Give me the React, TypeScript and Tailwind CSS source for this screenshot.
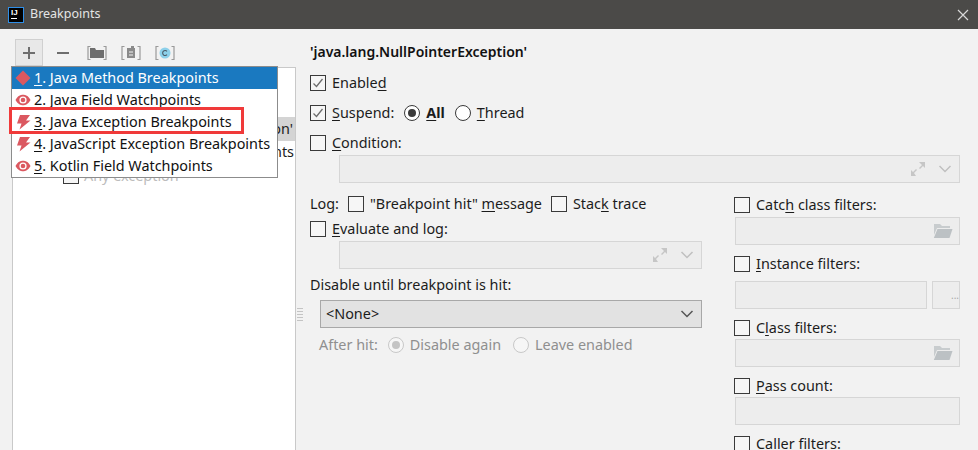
import React from "react";

function Check({ on = false }: { on?: boolean }) {
  return (
    <span className="flex h-4 w-4 shrink-0 items-center justify-center border border-[#3a3a3a] bg-[#f6f6f6]">
      {on && (
        <svg width="14" height="14" viewBox="0 0 14 14" fill="none">
          <path d="M2.5 7.5 L5.5 10.5 L11.5 3" stroke="#6e6e6e" strokeWidth="1.3" />
        </svg>
      )}
    </span>
  );
}

function Radio({ on = false, off = false }: { on?: boolean; off?: boolean }) {
  return (
    <span
      className={`flex h-4 w-4 shrink-0 items-center justify-center rounded-full border ${
        off ? "border-[#c8c8c8] bg-[#f6f6f6]" : "border-[#3a3a3a] bg-white"
      }`}
    >
      {on && <span className={`h-2 w-2 rounded-full ${off ? "bg-[#c4c4c4]" : "bg-[#3a3a3a]"}`} />}
    </span>
  );
}

function Mn({ children }: { children: React.ReactNode }) {
  return <span className="underline underline-offset-2">{children}</span>;
}

function Field({ className = "", children }: { className?: string; children?: React.ReactNode }) {
  return (
    <div className={`flex h-7 shrink-0 items-center justify-end border border-[#d6d6d6] bg-[#ededed] ${className}`}>
      {children}
    </div>
  );
}

function ExpandIcon() {
  return (
    <svg width="16" height="16" viewBox="0 0 16 16" className="mr-3" fill="#c6c6c6">
      <path d="M9 1h6v6l-2-2-3 3-1-1 3-3z" />
      <path d="M1 15V9l2 2 3-3 1 1-3 3 2 3z" />
    </svg>
  );
}

function Chevron({ color = "#c0c0c0" }: { color?: string }) {
  return (
    <svg width="14" height="10" viewBox="0 0 14 10" fill="none" className="mr-[7px]">
      <path d="M1.5 2 L7 7.5 L12.5 2" stroke={color} strokeWidth="1.5" />
    </svg>
  );
}

function OpenFolder() {
  return (
    <svg width="20" height="16" viewBox="0 0 20 16" className="mr-1.5">
      <path d="M1 3V1h6l2 2h8v2H4L1 12z" fill="#c8ccce" />
      <path d="M4.500 6H19.500L16.500 15H0.800z" fill="#bcc1c4" />
    </svg>
  );
}

function Diamond() {
  return (
    <svg width="16" height="16" viewBox="0 0 16 16">
      <path d="M8 0.500 L15.500 8 L8 15.500 L0.500 8z" fill="#db5860" />
    </svg>
  );
}

function Eye() {
  return (
    <svg width="16" height="16" viewBox="0 0 16 16">
      <path d="M0.500 8 C3 3.500 5.500 2.800 8 2.800 C10.500 2.800 13 3.500 15.500 8 C13 12.500 10.500 13.200 8 13.200 C5.500 13.200 3 12.500 0.500 8z" fill="#db5860" />
      <circle cx="8" cy="8" r="3.600" fill="#fff" />
      <circle cx="8" cy="8" r="2.300" fill="#db5860" />
    </svg>
  );
}

function Bolt() {
  return (
    <svg width="16" height="16" viewBox="0 0 16 16">
      <path d="M5 1H15L11 6.500H15.500L4.500 15.500L6.500 9.500H2z" fill="#db5860" />
    </svg>
  );
}

function ToolBtn({ children, active = false }: { children: React.ReactNode; active?: boolean }) {
  return (
    <div
      className={`flex h-[27px] w-[28px] items-center justify-center ${
        active ? "border border-[#d0d0d0] bg-[#e8e8e8]" : ""
      }`}
    >
      {children}
    </div>
  );
}

function Brackets({ children }: { children: React.ReactNode }) {
  return (
    <svg width="20" height="16" viewBox="0 0 20 16" fill="none">
      <path d="M3.500 1.500H1V14.500H3.500M16.500 1.500H19V14.500H16.500" stroke="#9a9a9a" strokeWidth="1.200" />
      {children}
    </svg>
  );
}

const menu = [
  { n: "1", rest: ". Java Method Breakpoints", icon: <Diamond />, sel: true },
  { n: "2", rest: ". Java Field Watchpoints", icon: <Eye /> },
  { n: "3", rest: ". Java Exception Breakpoints", icon: <Bolt /> },
  { n: "4", rest: ". JavaScript Exception Breakpoints", icon: <Bolt /> },
  { n: "5", rest: ". Kotlin Field Watchpoints", icon: <Eye /> },
];

export default function App() {
  return (
    <div className="relative flex h-[450px] w-[978px] flex-col overflow-hidden bg-[#f2f2f2] font-['Noto_Sans','Open_Sans',sans-serif] text-[14.4px] leading-5 text-[#1c1c1c]">
      {/* title bar */}
      <div className="flex h-[29px] shrink-0 items-center bg-[#4b4a48] pl-2 text-[#e4e4e4]">
        <div className="flex h-4 w-4 flex-col items-start border border-[#2f8fe8] bg-black pl-[2px] pt-[1px] font-['Liberation_Sans',sans-serif] text-[8px] font-bold leading-[8px] text-white">
          IJ
          <span className="mt-[1px] h-px w-[6px] bg-white" />
        </div>
        <span className="mb-[2px] ml-[6px] text-[12.5px]">Breakpoints</span>
        <svg width="12" height="12" viewBox="0 0 12 12" className="ml-auto mr-[9px]" fill="none">
          <path d="M1 1L11 11M11 1L1 11" stroke="#d8d8d8" strokeWidth="1.200" />
        </svg>
      </div>

      <div className="flex min-h-0 flex-1">
        {/* left side */}
        <div className="flex w-[296px] shrink-0 flex-col pl-[12px]">
          <div className="flex h-[38px] items-end gap-[6px] pb-[1px] pl-[3px]">
            <ToolBtn active>
              <svg width="14" height="14" viewBox="0 0 14 14">
                <path d="M6 1h2v5h5v2H8v5H6V8H1V6h5z" fill="#6e6e6e" />
              </svg>
            </ToolBtn>
            <ToolBtn>
              <svg width="14" height="14" viewBox="0 0 14 14">
                <path d="M1 6h12v2H1z" fill="#6e6e6e" />
              </svg>
            </ToolBtn>
            <ToolBtn>
              <Brackets>
                <path d="M3 3h5l1 2h8v8H3z" fill="#6e6e6e" />
              </Brackets>
            </ToolBtn>
            <ToolBtn>
              <Brackets>
                <path d="M6 3h4V1h3v2h1v10H6z" fill="#8a8a8a" />
                <path d="M8 7h4M8 10h4" stroke="#f2f2f2" />
              </Brackets>
            </ToolBtn>
            <ToolBtn>
              <Brackets>
                <circle cx="10" cy="8" r="5.500" fill="#8dd0ea" />
                <path d="M12 6.300A2.500 2.500 0 1 0 12 9.700" stroke="#4a5a66" strokeWidth="1.100" />
              </Brackets>
            </ToolBtn>
          </div>

          {/* breakpoint tree, mostly hidden by the menu */}
          <div className="min-h-0 flex-1 border border-b-0 border-[#c9c9c9] bg-white">
            <div className="mt-[49px] flex h-6 items-center justify-end bg-[#d4d4d4] pr-[2px] text-[#222]">on'</div>
            <div className="flex h-[22px] items-center justify-end pr-[1px]">nts</div>
            <div className="ml-[50px] mt-[3px] flex items-center gap-[5px] text-[#bcbcbc]">
              <Check />
              <span>Any exception</span>
            </div>
          </div>
        </div>

        {/* drag handle */}
        <div className="flex w-[14px] shrink-0 items-start">
          <div className="ml-[1px] mt-[278px] h-[16px] w-[6px] bg-[radial-gradient(#c4c4c4_0.8px,transparent_0.8px)] bg-[length:2px_3px]" />
        </div>

        {/* details */}
        <div className="flex min-w-0 flex-1 flex-col">
          <div className="mt-[12px] h-[22px] shrink-0 text-[14px] font-semibold leading-[22px] text-[#111]">'java.lang.NullPointerException'</div>

          <div className="mt-[10px] flex h-5 shrink-0 items-center gap-[6px]">
            <Check on />
            <span>
              Enable<Mn>d</Mn>
            </span>
          </div>
          <div className="mt-[10px] flex h-5 shrink-0 items-center gap-[6px]">
            <Check on />
            <span>
              <Mn>S</Mn>uspend:
            </span>
            <span className="ml-[4px]">
              <Radio on />
            </span>
            <span className="font-bold">
              <Mn>A</Mn>ll
            </span>
            <span className="ml-[4px]">
              <Radio />
            </span>
            <span>
              <Mn>T</Mn>hread
            </span>
          </div>
          <div className="mt-[10px] flex h-5 shrink-0 items-center gap-[6px]">
            <Check />
            <span>
              <Mn>C</Mn>ondition:
            </span>
          </div>
          <Field className="ml-[29px] mr-[18px] mt-[2px]">
            <ExpandIcon />
            <Chevron />
          </Field>

          <div className="flex shrink-0">
            <div className="flex w-[392px] shrink-0 flex-col">
              <div className="mt-[11px] flex h-5 items-center">
                <span>Log:</span>
                <span className="ml-[9px]">
                  <Check />
                </span>
                <span className="ml-[6px]">
                  "Breakpoint hit" <Mn>m</Mn>essage
                </span>
                <span className="ml-[9px]">
                  <Check />
                </span>
                <span className="ml-[6px]">
                  Stac<Mn>k</Mn> trace
                </span>
              </div>
              <div className="mt-[5px] flex h-5 items-center gap-[6px]">
                <Check />
                <span>
                  <Mn>E</Mn>valuate and log:
                </span>
              </div>
              <Field className="ml-[29px] mt-[2px]">
                <ExpandIcon />
                <Chevron />
              </Field>
              <div className="mt-[6px] h-5">Disable until breakpoint is hit:</div>
              <div className="ml-[10px] mt-[5px] flex h-7 items-center justify-between border border-[#a8a8a8] bg-[#e2e2e2] pl-[5px]">
                <span>&lt;None&gt;</span>
                <Chevron color="#555555" />
              </div>
              <div className="ml-[9px] mt-[7px] flex h-5 items-center text-[#8f8f8f]">
                <span>After hit:</span>
                <span className="ml-[10px]">
                  <Radio on off />
                </span>
                <span className="ml-[6px]">Disable again</span>
                <span className="ml-[12px]">
                  <Radio off />
                </span>
                <span className="ml-[6px]">Leave enabled</span>
              </div>
            </div>

            <div className="ml-[32px] flex w-[226px] shrink-0 flex-col">
              <div className="mt-[12px] flex h-5 items-center gap-[6px]">
                <Check />
                <span>
                  Catc<Mn>h</Mn> class filters:
                </span>
              </div>
              <Field className="ml-px mt-[2px]">
                <OpenFolder />
              </Field>
              <div className="mt-[9px] flex h-5 items-center gap-[6px]">
                <Check />
                <span>
                  <Mn>I</Mn>nstance filters:
                </span>
              </div>
              <div className="ml-px mt-[7px] flex gap-[5px]">
                <Field className="min-w-0 flex-1" />
                <Field className="w-7 justify-center text-[10px] leading-3 text-[#a8a8a8]">...</Field>
              </div>
              <div className="mt-[9px] flex h-5 items-center gap-[6px]">
                <Check />
                <span>
                  C<Mn>l</Mn>ass filters:
                </span>
              </div>
              <Field className="ml-px mt-px">
                <OpenFolder />
              </Field>
              <div className="mt-[9px] flex h-5 items-center gap-[6px]">
                <Check />
                <span>
                  <Mn>P</Mn>ass count:
                </span>
              </div>
              <Field className="ml-px mt-px" />
              <div className="mt-[9px] flex h-5 items-center gap-[6px]">
                <Check />
                <span>Caller filters:</span>
              </div>
            </div>
          </div>
        </div>
      </div>

      {/* add menu popup */}
      <div className="absolute left-[11px] top-[66px] w-[267px] border border-[#8c8c8c] bg-white">
        {menu.map((m) => (
          <div
            key={m.n}
            className={`flex h-[22px] items-center pl-[3px] ${m.sel ? "bg-[#1a79c0] text-white" : "text-[#111]"}`}
          >
            {m.icon}
            <span className="ml-[3px] whitespace-nowrap">
              <Mn>{m.n}</Mn>
              {m.rest}
            </span>
          </div>
        ))}
      </div>

      {/* red callout */}
      <div className="absolute left-[9px] top-[107px] h-[27px] w-[235px] border-[3px] border-[#f03a3a]" />
    </div>
  );
}
